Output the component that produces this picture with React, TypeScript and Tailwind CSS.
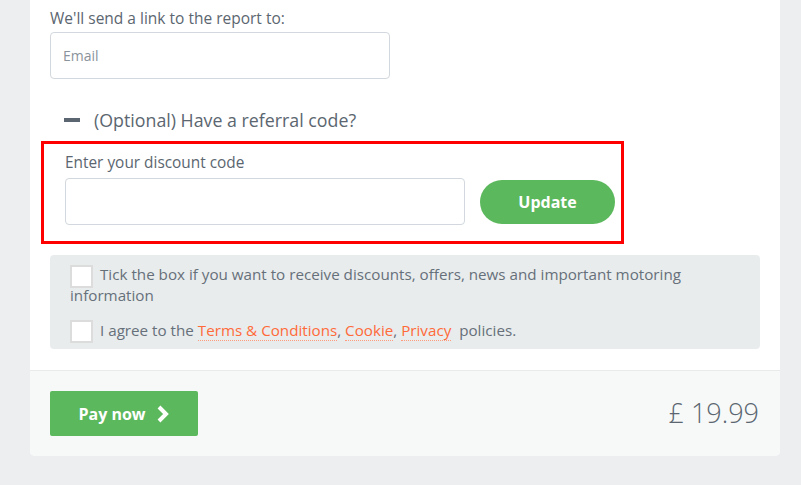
import React from "react";

const font = { fontFamily: "'Open Sans', Lato, sans-serif" };

function Checkbox({ className = "" }: { className?: string }) {
  return (
    <span className={`block w-[23px] h-[23px] bg-white border-2 border-[#dcdcdc] shrink-0 ${className}`} />
  );
}

function PolicyLink({ children }: { children: React.ReactNode }) {
  return (
    <a className="text-[#ff6a39] border-b border-dotted border-[#ff9a7a] leading-[18px]">{children}</a>
  );
}

export default function App() {
  return (
    <div className="w-[801px] h-[485px] bg-[#edeef0] overflow-hidden" style={font}>
      <div className="ml-[30px] w-[750px] bg-white rounded-b-[5px]">
        <div className="px-[20px] pt-[8px] pb-[21px]">
          <p className="text-[15.5px] text-[#5b6670] leading-[20px]">We'll send a link to the report to:</p>
          <input
            className="mt-[4px] w-[340px] h-[47px] border border-[#d2d8de] rounded-[4px] px-[12px] text-[14px] outline-none placeholder:text-[#8a939b]"
            placeholder="Email"
          />
          <div className="mt-[29px] flex items-center pl-[14px] h-[24px]">
            <span className="w-[16px] h-[4px] bg-[#5b6670]" />
            <span className="ml-[14px] text-[17.8px] text-[#5b6670]">(Optional) Have a referral code?</span>
          </div>
          <div className="mt-[9px] -ml-[9px] w-[583px] h-[103px] border-[3px] border-[#ff0000] pl-[21px] pr-[6px] pt-[9px]">
            <p className="text-[15.4px] text-[#5b6670] leading-[20px]">Enter your discount code</p>
            <div className="mt-[5px] flex items-center">
              <input className="w-[400px] h-[47px] border border-[#d2d8de] rounded-[4px] px-[12px] outline-none" />
              <button className="ml-[15px] w-[135px] h-[44px] rounded-full bg-[#5cb85c] text-white text-[16px] font-bold">
                Update
              </button>
            </div>
          </div>
          <div className="mt-[11px] bg-[#e9eced] rounded-[4px] px-[20px] pt-[9px] pb-[6px] text-[15.2px] text-[#66707a] leading-[21px]">
            <div className="flow-root">
              <Checkbox className="float-left mt-[1px] mr-[7px] -mb-[3px]" />
              <span>
                Tick the box if you want to receive discounts, offers, news and important motoring information
              </span>
            </div>
            <div className="mt-[14px] flex items-start">
              <Checkbox />
              <span className="ml-[7px]">
                I agree to the <PolicyLink>Terms &amp; Conditions</PolicyLink>, <PolicyLink>Cookie</PolicyLink>,{" "}
                <PolicyLink>Privacy</PolicyLink>&nbsp; policies.
              </span>
            </div>
          </div>
        </div>
        <div className="border-t border-[#e8eaeb] bg-[#f7f9f9] rounded-b-[5px] px-[20px] pt-[20px] pb-[20px] flex items-center justify-between">
          <button className="w-[148px] h-[45px] bg-[#5cb85c] rounded-[2px] text-white text-[16px] font-bold flex items-center justify-center gap-[10px]">
            Pay now
            <svg width="14" height="18" viewBox="0 0 14 18">
              <path d="M3 2 L10 9 L3 16" stroke="white" strokeWidth="4" fill="none" />
            </svg>
          </button>
          <span className="mr-[1px] text-[27px] text-[#5b6670] font-light">£ 19.99</span>
        </div>
      </div>
    </div>
  );
}
